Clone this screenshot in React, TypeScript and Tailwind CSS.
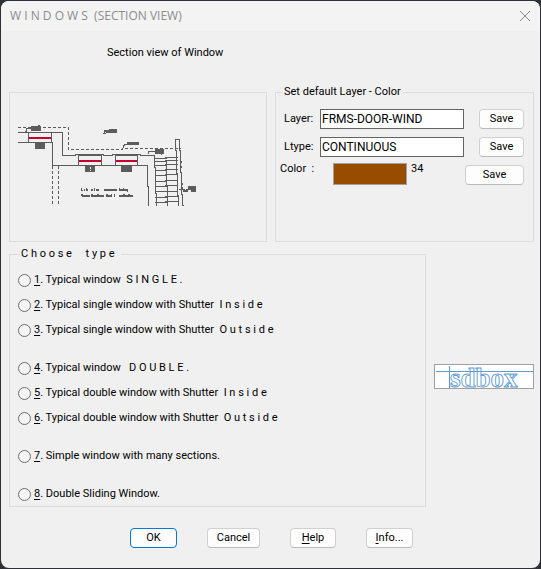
import React, { useState } from "react";
import { clsx } from "clsx";

interface WindowType {
  id: number;
  label: string;
  suffix?: string;
  groupEnd?: boolean;
}

const WINDOW_TYPES: WindowType[] = [
  { id: 1, label: "Typical window", suffix: "  S I N G L E ." },
  { id: 2, label: "Typical single window with Shutter", suffix: "  I n s i d e" },
  { id: 3, label: "Typical single window with Shutter", suffix: "  O u t s i d e", groupEnd: true },
  { id: 4, label: "Typical window", suffix: "   D O U B L E ." },
  { id: 5, label: "Typical double window with Shutter", suffix: "  I n s i d e" },
  { id: 6, label: "Typical double window with Shutter", suffix: "  O u t s i d e", groupEnd: true },
  { id: 7, label: "Simple window with many sections.", groupEnd: true },
  { id: 8, label: "Double Sliding Window." },
];

const LEFT_TREADS = [158, 161, 165, 170, 175, 181, 186, 191, 197, 202];
const RIGHT_TREADS = [157, 160, 164, 169, 174, 180, 185, 191, 196, 201];

function DialogButton({
  className,
  primary,
  children,
}: {
  className?: string;
  primary?: boolean;
  children: React.ReactNode;
}) {
  return (
    <button
      type="button"
      className={clsx(
        "h-5 rounded border bg-[#fdfdfd] text-center leading-4",
        primary ? "border-[#0078d4]" : "border-[#d0d0d0] border-b-[#bababa]",
        className
      )}
    >
      {children}
    </button>
  );
}

// Wall section with windows, stair and callouts
function SectionPreview() {
  return (
    <svg viewBox="10 93 256 148" className="block w-full" shapeRendering="crispEdges" role="img" aria-label="Section preview">
      <g fill="none" stroke="#5c5c5c">
        <path d="M18 127.5H68.5V149.5H122.5V148.5H181" strokeDasharray="3 2" />
        <path d="M52.5 166V204M58.5 166V204" strokeDasharray="3 2" />
        <path d="M18 132.5H62.5V155.5H75.5V154.5H103.5V155.5H112.5V154.5H140.5V155.5H154.5V167.5H155.5V193.5H156.5V206" />
        <path d="M18 142.5H52.5V165.5H147.5V186.5H148.5V206" />
        <path d="M28.5 132V143M51.5 132V143M78.5 154V166M101.5 154V166M115.5 154V166M137.5 154V166M78 155.5H102M115 155.5H138" />
        <path d="M175.5 151V139.5H179.5V150.5H180.5V172.5H181.5V194.5H182.5V205.5H184" />
        <path d="M175.5 150.5H176.5V173.5H177.5V195.5H178.5V206M166.5 162V185.5H167.5V206" />
        <path d="M25 131.5H26V128.5H31M123.5 148V145.5H124.5V144.5H127M148.5 154V151.5H150V151.5H155M179 189.5H188" />
        {LEFT_TREADS.map((y) => (
          <path key={y} d={`M155 ${y}.5H167`} />
        ))}
        {RIGHT_TREADS.map((y) => (
          <path key={y} d={`M165 ${y}.5H178`} />
        ))}
      </g>

      <g fill="#c8002f">
        <rect x="29" y="137" width="22" height="2" />
        <rect x="79" y="160" width="22" height="2" />
        <rect x="116" y="160" width="21" height="2" />
      </g>

      {/* callout blocks */}
      <path
        fill="#5c5c5c"
        d="M31 126h7v-1h2v1h1v5h-10zM35 143h10v6h-10zM85 166h10v6h-10zM121 166h11v6h-11zM109 129h8v4h-8zM104 130h5v3h-3v1h-3v-1h1zM127 142h12v3h-12zM155 149h9v5h-2v1h-1v-1h-6zM188 186h8v6h-5v-2h-3zM183 190h5v2h-5zM181 187h2v3h-2zM181 161h1v2h-1zM181 166h1v2h-1zM182 183h1v2h-1z"
      />
      <path fill="#efefef" d="M90 167h1v2h-1zM90 170h1v1h-1zM105 132h1v1h-1zM185 189h1v1h-1z" />
      <path
        fill="#5c5c5c"
        d="M81 188h1v3h-1zM82 190h1v1h-1zM84 189h1v2h-1zM86 188h1v3h-1zM87 189h1v2h-1zM91 189h2v2h-2zM94 188h1v3h-1zM96 189h3v2h-3zM104 189h8v2h-8zM112 189h5v2h-5zM119 188h1v3h-1zM120 189h3v2h-3zM123 188h1v3h-1zM124 189h4v2h-4zM127 191h1v1h-1zM81 194h2v1h7v2h-8v-1h-1zM91 194h2v1h4v-1h2v1h5v2h-13zM106 194h2v1h3v-1h1v3h-6zM114 194h1v3h-1zM119 195h4v-1h2v1h3v-1h2v1h3v2h-14z"
      />
    </svg>
  );
}

function Logo() {
  return (
    <svg viewBox="0 0 98 23" className="block w-full overflow-visible" role="img" aria-label="sdbox">
      <text
        x="15"
        y="22"
        fontFamily="Liberation Serif, serif"
        fontWeight="bold"
        fontSize="27"
        fill="#ffffff"
        stroke="#5f9bd1"
        strokeWidth="0.9"
      >
        sdbox
      </text>
      <path d="M1 6.5H98M14.5 1V23" stroke="#5f9bd1" fill="none" shapeRendering="crispEdges" />
    </svg>
  );
}

export default function App() {
  const [layer, setLayer] = useState("FRMS-DOOR-WIND");
  const [ltype, setLtype] = useState("CONTINUOUS");
  const [selected, setSelected] = useState<number | null>(null);

  return (
    <div className="min-h-screen bg-[#2f2f36] p-px font-['Roboto',sans-serif] text-[11px] leading-4 text-black">
      <div className="overflow-hidden rounded-lg bg-[#f0f0f0]">
        <header className="flex h-[30px] items-center justify-between bg-[#f3f3f3] pr-[9px] pl-[9px]">
          <h1 className="font-['Open_Sans',sans-serif] text-[12px] whitespace-pre text-[#8c8c8c]">{"W I N D O W S  (SECTION VIEW)"}</h1>
          <button type="button" aria-label="Close">
            <svg viewBox="0 0 12 12" className="size-3" fill="none" stroke="#8a8a8a">
              <path d="M1 1L11 11M11 1L1 11" />
            </svg>
          </button>
        </header>

        <main className="pr-1.5 pb-5 pl-2">
          <p className="pt-3 pb-[21px] pl-[98px] leading-5">Section view of Window</p>

          <div className="grid grid-cols-[258fr_259fr] gap-2">
            <section className="mt-2 border border-[#dcdcdc]">
              <SectionPreview />
            </section>

            <fieldset className="min-w-0 border border-[#dcdcdc] pr-[9px] pl-1">
              <legend className="ml-0.5 px-0.5">Set default Layer - Color</legend>
              <div className="flex items-center pt-[9px]">
                <label htmlFor="layer" className="w-10 pl-1">Layer:</label>
                <input
                  id="layer"
                  value={layer}
                  onChange={(e) => setLayer(e.target.value)}
                  className="h-5 min-w-0 flex-1 border border-[#646464] bg-white px-px text-[12px]"
                />
                <DialogButton className="ml-[15px] w-[45px]">Save</DialogButton>
              </div>
              <div className="flex items-center pt-2">
                <label htmlFor="ltype" className="w-10 pl-1">Ltype:</label>
                <input
                  id="ltype"
                  value={ltype}
                  onChange={(e) => setLtype(e.target.value)}
                  className="h-5 min-w-0 flex-1 border border-[#646464] bg-white px-px text-[12px]"
                />
                <DialogButton className="ml-[15px] w-[45px]">Save</DialogButton>
              </div>
              <div className="flex items-start pt-1">
                <span className="w-[53px] whitespace-pre">{"Color  :"}</span>
                <button type="button" aria-label="Pick color" className="mt-0.5 h-[22px] w-[74px] border border-[#a0a0a0] bg-[#984c00]" />
                <span className="ml-1">34</span>
                <DialogButton className="mt-1 ml-auto w-[59px]">Save</DialogButton>
              </div>
            </fieldset>
          </div>

          <div className="mt-1 flex items-center gap-2">
            <fieldset className="min-w-0 flex-1 border border-[#dcdcdc] pb-1 pl-2">
              <legend className="ml-0.5 px-px whitespace-pre">{"C h o o s e     t y p e  "}</legend>
              <div className="flex flex-col gap-[9px] pt-2.5">
                {WINDOW_TYPES.map((type) => (
                  <label
                    key={type.id}
                    className={clsx("flex items-center gap-[3px] whitespace-pre", type.groupEnd && "mb-[13px]")}
                  >
                    <input
                      type="radio"
                      name="window-type"
                      checked={selected === type.id}
                      onChange={() => setSelected(type.id)}
                      className="size-[13px] appearance-none rounded-full border border-[#6e6e6e] bg-[#f4f4f4] checked:border-4 checked:border-[#0078d4]"
                    />
                    <span>
                      <u className="underline-offset-2">{type.id}</u>. {type.label}
                      {type.suffix}
                    </span>
                  </label>
                ))}
              </div>
            </fieldset>
            <a href="#about" className="block w-[100px] border border-[#a0a0a0] bg-white">
              <Logo />
            </a>
          </div>

          <footer className="mt-[21px] flex gap-[30px] pl-[121px]">
            <DialogButton primary className="w-[47px]">OK</DialogButton>
            <DialogButton className="w-[53px]">Cancel</DialogButton>
            <DialogButton className="w-[46px]">
              <u className="underline-offset-2">H</u>elp
            </DialogButton>
            <DialogButton className="w-[47px]">
              <u className="underline-offset-2">I</u>nfo...
            </DialogButton>
          </footer>
        </main>
      </div>
    </div>
  );
}
